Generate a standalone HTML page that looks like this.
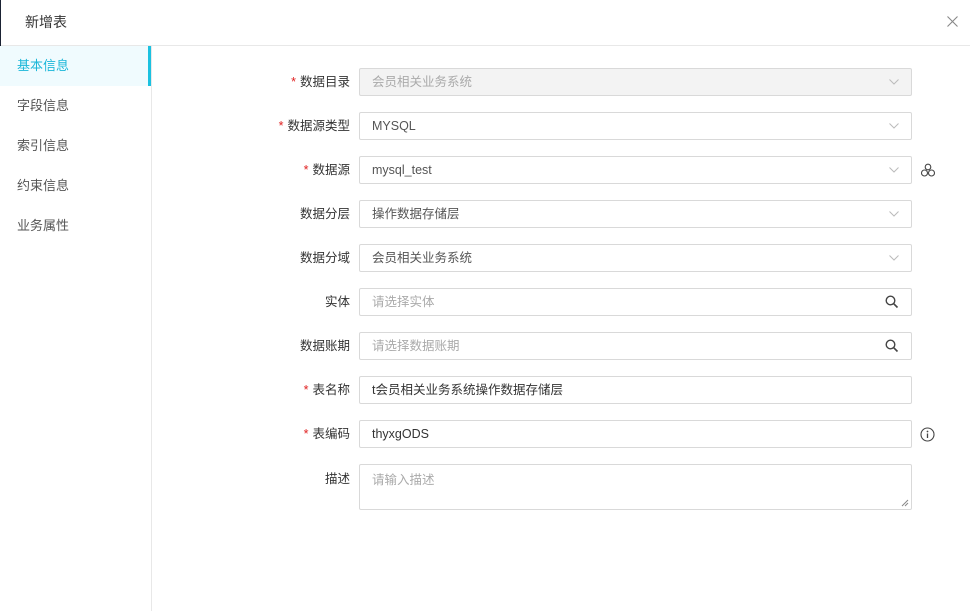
<!DOCTYPE html>
<html><head><meta charset="utf-8"><style>
*{box-sizing:border-box;margin:0;padding:0}
body{width:970px;height:611px;background:#fff;font-family:"Liberation Sans","Noto Sans CJK SC",sans-serif;font-size:12px;color:#333;position:relative;overflow:hidden}
.hdr{position:absolute;left:0;top:0;width:970px;height:46px;border-bottom:1px solid #e8e8e8}
.hdr .t{position:absolute;left:25px;top:0;line-height:44px;font-size:14px;color:#333}
.lb{position:absolute;left:0;top:0;width:1px;height:85px;background:#1a2233}
.side{position:absolute;left:0;top:46px;width:152px;height:565px;border-right:1px solid #e8e8e8}
.it{height:40px;line-height:40px;padding-left:17px;font-size:13px;color:#555}
.it.a{background:#f0fbfe;color:#1bb7d9;border-right:3px solid #1bc1e0}
.row{position:absolute;left:160px;width:800px;height:28px}
.lab{position:absolute;right:610px;top:0;line-height:28px;font-size:12.5px;color:#333;white-space:nowrap}
.lab i{color:#e02020;font-style:normal;margin-right:4px}
.in{position:absolute;left:199px;top:0;width:553px;height:28px;border:1px solid #d9d9d9;border-radius:2px;padding:0 12px;line-height:26px;color:#555;font-size:12.5px}
.in.d{background:#f3f3f3;color:#aaa}
.in.p{color:#aaa}
.chev{position:absolute;right:12px;top:9px;width:10px;height:8px}
.mag{position:absolute;right:12px;top:6px}
</style></head><body>
<div class="hdr"><div class="t">新增表</div>
<svg style="position:absolute;left:947px;top:16px" width="11" height="11" viewBox="0 0 11 11"><path d="M0.5 0.5L10.5 10.5M10.5 0.5L0.5 10.5" stroke="#888" stroke-width="1.1"/></svg></div>
<div class="lb"></div>
<div class="side">
<div class="it a">基本信息</div><div class="it">字段信息</div><div class="it">索引信息</div><div class="it">约束信息</div><div class="it">业务属性</div>
</div>

<div class="row" style="top:68px"><div class="lab"><i>*</i>数据目录</div><div class="in d">会员相关业务系统<svg class="chev" viewBox="0 0 10 8"><path d="M0.5 1.5L5 6 9.5 1.5" fill="none" stroke="#bbb"/></svg></div></div>
<div class="row" style="top:112px"><div class="lab"><i>*</i>数据源类型</div><div class="in">MYSQL<svg class="chev" viewBox="0 0 10 8"><path d="M0.5 1.5L5 6 9.5 1.5" fill="none" stroke="#bbb"/></svg></div></div>
<div class="row" style="top:156px"><div class="lab"><i>*</i>数据源</div><div class="in">mysql_test<svg class="chev" viewBox="0 0 10 8"><path d="M0.5 1.5L5 6 9.5 1.5" fill="none" stroke="#bbb"/></svg></div>
<svg style="position:absolute;left:760px;top:7px" width="16" height="15" viewBox="0 0 16 15"><g fill="none" stroke="#444" stroke-width="1.1"><circle cx="8" cy="4" r="2.8"/><circle cx="4.5" cy="10" r="3"/><circle cx="11.5" cy="10" r="3"/></g></svg></div>
<div class="row" style="top:200px"><div class="lab">数据分层</div><div class="in">操作数据存储层<svg class="chev" viewBox="0 0 10 8"><path d="M0.5 1.5L5 6 9.5 1.5" fill="none" stroke="#bbb"/></svg></div></div>
<div class="row" style="top:244px"><div class="lab">数据分域</div><div class="in">会员相关业务系统<svg class="chev" viewBox="0 0 10 8"><path d="M0.5 1.5L5 6 9.5 1.5" fill="none" stroke="#bbb"/></svg></div></div>
<div class="row" style="top:288px"><div class="lab">实体</div><div class="in p">请选择实体<svg class="mag" width="14" height="14" viewBox="0 0 14 14"><circle cx="5.5" cy="5.5" r="4.3" fill="none" stroke="#444" stroke-width="1.4"/><path d="M8.7 8.7L12.5 12.5" stroke="#444" stroke-width="1.6"/></svg></div></div>
<div class="row" style="top:332px"><div class="lab">数据账期</div><div class="in p">请选择数据账期<svg class="mag" width="14" height="14" viewBox="0 0 14 14"><circle cx="5.5" cy="5.5" r="4.3" fill="none" stroke="#444" stroke-width="1.4"/><path d="M8.7 8.7L12.5 12.5" stroke="#444" stroke-width="1.6"/></svg></div></div>
<div class="row" style="top:376px"><div class="lab"><i>*</i>表名称</div><div class="in" style="color:#333">t会员相关业务系统操作数据存储层</div></div>
<div class="row" style="top:420px"><div class="lab"><i>*</i>表编码</div><div class="in" style="color:#333">thyxgODS</div>
<svg style="position:absolute;left:760px;top:7px" width="15" height="15" viewBox="0 0 15 15"><circle cx="7.5" cy="7.5" r="6.5" fill="none" stroke="#444" stroke-width="1.1"/><circle cx="7.5" cy="4.5" r="0.9" fill="#444"/><path d="M7.5 6.5V11" stroke="#444" stroke-width="1.3"/></svg></div>
<div class="row" style="top:464px;height:46px"><div class="lab" style="line-height:30px">描述</div><div class="in p" style="height:46px;line-height:30px">请输入描述<svg style="position:absolute;right:2px;bottom:2px" width="8" height="8" viewBox="0 0 8 8"><path d="M1 7L7 1M4 7L7 4" stroke="#888"/></svg></div></div>
</body></html>
